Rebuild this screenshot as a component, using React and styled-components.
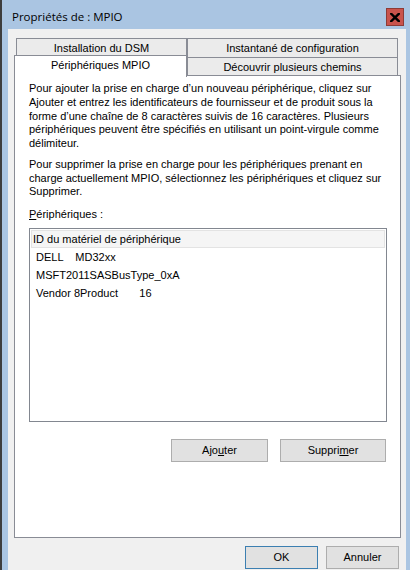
import React from 'react';
import styled, { createGlobalStyle } from 'styled-components';

const Global = createGlobalStyle`
  html, body { margin: 0; padding: 0; background: #aac5e2; }
  body { width: 410px; height: 570px; overflow: hidden; }
`;

const Window = styled.div`
  width: 410px;
  height: 570px;
  box-sizing: border-box;
  background: #aac5e2;
  border-left: 2px solid #3d3d3d;
  display: flex;
  flex-direction: column;
  overflow: hidden;
  font-family: "Liberation Sans", Arial, sans-serif;
  font-size: 11px;
  color: #000;
`;

const TitleBar = styled.div`
  height: 29px;
  flex: none;
  display: flex;
  align-items: flex-start;
  justify-content: space-between;
  padding: 0 6px 0 10px;
  box-sizing: border-box;
`;

const Title = styled.div`
  font-family: "Open Sans", sans-serif;
  font-size: 11.5px;
  line-height: 16px;
  margin-top: 9px;
  color: #000;
`;

const CloseBtn = styled.div`
  margin-top: 8px;
  width: 18px;
  height: 18px;
  box-sizing: border-box;
  background: #c9534c;
  border: 1px solid #8e3b36;
  display: flex;
  align-items: center;
  justify-content: center;
`;

const Client = styled.div`
  flex: 1;
  margin: 0 4px 0 6px;
  background: #f0f0f0;
  padding: 9px 5px 0 6px;
  display: flex;
  flex-direction: column;
`;

const TabRow = styled.div`
  display: flex;
  margin-left: ${p => p.$indent}px;
  height: 19px;
`;

const Tab = styled.div`
  box-sizing: border-box;
  width: ${p => p.$w}px;
  height: 19px;
  background: #ebebeb;
  border: 1px solid #898c95;
  border-bottom: none;
  display: flex;
  align-items: center;
  justify-content: center;
  white-space: nowrap;
  padding-bottom: 1px;
`;

const ActiveTab = styled.div`
  position: relative;
  z-index: 1;
  box-sizing: border-box;
  width: ${p => p.$w}px;
  height: 22px;
  margin-top: -2px;
  background: #fff;
  border: 1px solid #898c95;
  border-bottom: none;
  display: flex;
  align-items: flex-start;
  justify-content: center;
  padding-top: 3px;
  white-space: nowrap;
`;

const Panel = styled.div`
  box-sizing: border-box;
  width: 387px;
  height: 463px;
  margin-top: -1px;
  background: #fff;
  border: 1px solid #898c95;
  padding: 6px 13px 0 14px;
  display: flex;
  flex-direction: column;
`;

const Para = styled.p`
  margin: 0 0 ${p => p.$mb}px 0;
  line-height: 13.75px;
  white-space: nowrap;
`;

const ListBox = styled.div`
  margin-top: 6px;
  box-sizing: border-box;
  height: 194px;
  border: 1px solid #828790;
  padding: 1px;
  background: #fff;
`;

const ListHeader = styled.div`
  box-sizing: border-box;
  height: 18px;
  background: #f5f5f5;
  border: 1px solid #e3e3e3;
  display: flex;
  align-items: center;
  padding-left: 1px;
`;

const ListItem = styled.div`
  height: 18px;
  display: flex;
  align-items: center;
  padding-left: 5px;
  white-space: pre;
`;

const ButtonRow = styled.div`
  display: flex;
  justify-content: flex-end;
  gap: ${p => p.$gap}px;
  margin-top: ${p => p.$mt}px;
  margin-right: ${p => p.$mr}px;
`;

const Button = styled.div`
  box-sizing: border-box;
  width: ${p => p.$w}px;
  height: 23px;
  background: #e1e1e1;
  border: 1px solid ${p => (p.$default ? '#3c7fb1' : '#adadad')};
  display: flex;
  align-items: center;
  justify-content: center;
  padding-bottom: 1px;
`;

const U = styled.span`
  text-decoration: underline;
  text-underline-offset: 1px;
`;

export default function App() {
  return (
    <>
      <Global />
      <Window>
        <TitleBar>
          <Title>Propriétés de : MPIO</Title>
          <CloseBtn>
            <svg width="10" height="9" viewBox="0 0 10 9">
              <path d="M1.2 0.8 L8.8 8.2 M8.8 0.8 L1.2 8.2" stroke="#000" strokeWidth="2.4" strokeLinecap="square" />
            </svg>
          </CloseBtn>
        </TitleBar>
        <Client>
          <TabRow $indent={2}>
            <Tab $w={171}>Installation du DSM</Tab>
            <Tab $w={211}>Instantané de configuration</Tab>
          </TabRow>
          <TabRow $indent={0}>
            <ActiveTab $w={173}>Périphériques MPIO</ActiveTab>
            <Tab $w={211}>Découvrir plusieurs chemins</Tab>
          </TabRow>
          <Panel>
            <Para $mb={7}>
              Pour ajouter la prise en charge d’un nouveau périphérique, cliquez sur<br />
              Ajouter et entrez les identificateurs de fournisseur et de produit sous la<br />
              forme d’une chaîne de 8 caractères suivis de 16 caractères. Plusieurs<br />
              périphériques peuvent être spécifiés en utilisant un point-virgule comme<br />
              délimiteur.
            </Para>
            <Para $mb={9}>
              Pour supprimer la prise en charge pour les périphériques prenant en<br />
              charge actuellement MPIO, sélectionnez les périphériques et cliquez sur<br />
              Supprimer.
            </Para>
            <Para $mb={0}>
              <U>P</U>ériphériques :
            </Para>
            <ListBox>
              <ListHeader>ID du matériel de périphérique</ListHeader>
              <ListItem>{'DELL    MD32xx'}</ListItem>
              <ListItem>{'MSFT2011SASBusType_0xA'}</ListItem>
              <ListItem>{'Vendor 8Product       16'}</ListItem>
            </ListBox>
            <ButtonRow $gap={12} $mt={17} $mr={1}>
              <Button $w={97}>Ajo<U>u</U>ter</Button>
              <Button $w={106}>Suppri<U>m</U>er</Button>
            </ButtonRow>
          </Panel>
          <ButtonRow $gap={8} $mt={8} $mr={2}>
            <Button $w={73} $default>OK</Button>
            <Button $w={73}>Annuler</Button>
          </ButtonRow>
        </Client>
      </Window>
    </>
  );
}
